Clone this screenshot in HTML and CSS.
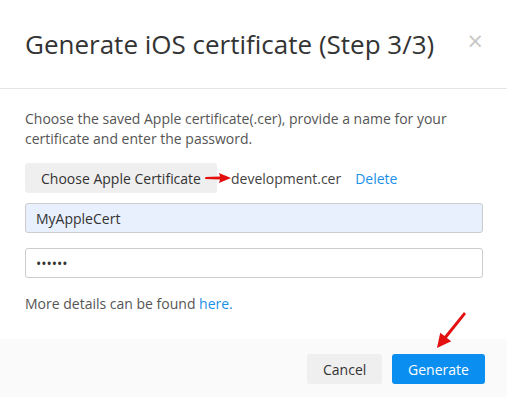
FILE: index.html
```html
<!DOCTYPE html>
<html lang="en">

<head>
    <meta charset="UTF-8">
    <title>Generate iOS certificate</title>
    <link rel="stylesheet" href="styles.css">
</head>

<body>
    <div class="modal">
        <div class="modal-head">
            <h1 class="modal-title">Generate iOS certificate (Step 3/3)</h1>
            <span class="close">&times;</span>
        </div>

        <div class="modal-body">
            <p class="intro">Choose the saved Apple certificate(.cer), provide a name for your certificate and enter the password.</p>

            <div class="file-row">
                <button class="btn btn-grey">Choose Apple Certificate</button>
                <svg class="arrow-small" width="26" height="12" viewBox="0 0 26 12">
                    <path d="M0 7 L0.5 5 L15 4.6 L14 1 L26 6 L14 11 L15 7.6 Z" fill="#e31010"/>
                </svg>
                <span class="file-name">development.cer</span>
                <a class="link delete">Delete</a>
            </div>

            <input type="text" class="field field-filled" value="MyAppleCert">
            <input type="password" class="field" value="secret">

            <p class="details">More details can be found <a class="link">here.</a></p>
        </div>

        <div class="modal-foot">
            <button class="btn btn-grey">Cancel</button>
            <button class="btn btn-blue">Generate</button>
        </div>

        <!-- pointer to generate button -->
        <svg class="arrow-big" width="36" height="40" viewBox="0 0 36 40">
            <path d="M3 38 L6.2 22.7 L10.5 26.1 L30 2 L32 4 L12.9 27.9 L17.2 31.3 Z" fill="#e31010"/>
        </svg>
    </div>
</body>

</html>
```

FILE: styles.css
```css
* {
    font-family: 'Open Sans', 'Liberation Sans', sans-serif;
    box-sizing: border-box;
}

body {
    margin: 0;
    background: #fff;
}

.modal {
    position: relative;
    width: 507px;
    height: 397px;
    display: flex;
    flex-direction: column;
}

.modal-head {
    height: 89px;
    border-bottom: 1px solid #e5e5e5;
    display: flex;
    align-items: flex-start;
    justify-content: space-between;
    padding: 24px 24px 0 25px;
}

.modal-title {
    margin: 0;
    font-size: 26px;
    font-weight: normal;
    color: #333;
    line-height: 40px;
}

.close {
    font-size: 27px;
    color: #c8c8c8;
    line-height: 30px;
    margin-top: 2px;
}

.modal-body {
    padding: 20px 24px 0 25px;
    flex: 1;
}

.intro {
    margin: 0 0 14px;
    font-size: 14px;
    line-height: 20px;
    color: #555;
}

.file-row {
    display: flex;
    align-items: center;
    margin-bottom: 10px;
}

.btn {
    border: none;
    border-radius: 3px;
    font-size: 14px;
    height: 30px;
    padding: 0 16px;
    color: #333;
}

.btn-grey {
    background: #efefef;
}

.file-row .btn {
    width: 192px;
}

.arrow-small {
    margin-left: -12px;
}

.file-name {
    font-size: 14px;
    color: #444;
}

.link {
    color: #1a8fe8;
    font-size: 14px;
}

.delete {
    margin-left: 14px;
}

.field {
    display: block;
    width: 458px;
    height: 30px;
    border: 1px solid #ccc;
    border-radius: 3px;
    padding: 0 10px;
    font-size: 14px;
    color: #333;
    margin-bottom: 15px;
}

.field-filled {
    background: #e8f0fe;
}

.details {
    margin: 16px 0 0;
    font-size: 14px;
    color: #555;
}

.modal-foot {
    height: 58px;
    background: #fafafa;
    display: flex;
    justify-content: flex-end;
    align-items: flex-start;
    gap: 10px;
    padding: 15px 22px 0 0;
}

.btn-blue {
    background: #0a8ef0;
    color: #fff;
    width: 93px;
}

.modal-foot .btn-grey {
    width: 75px;
}

.arrow-big {
    position: absolute;
    left: 434px;
    top: 310px;
}
```
